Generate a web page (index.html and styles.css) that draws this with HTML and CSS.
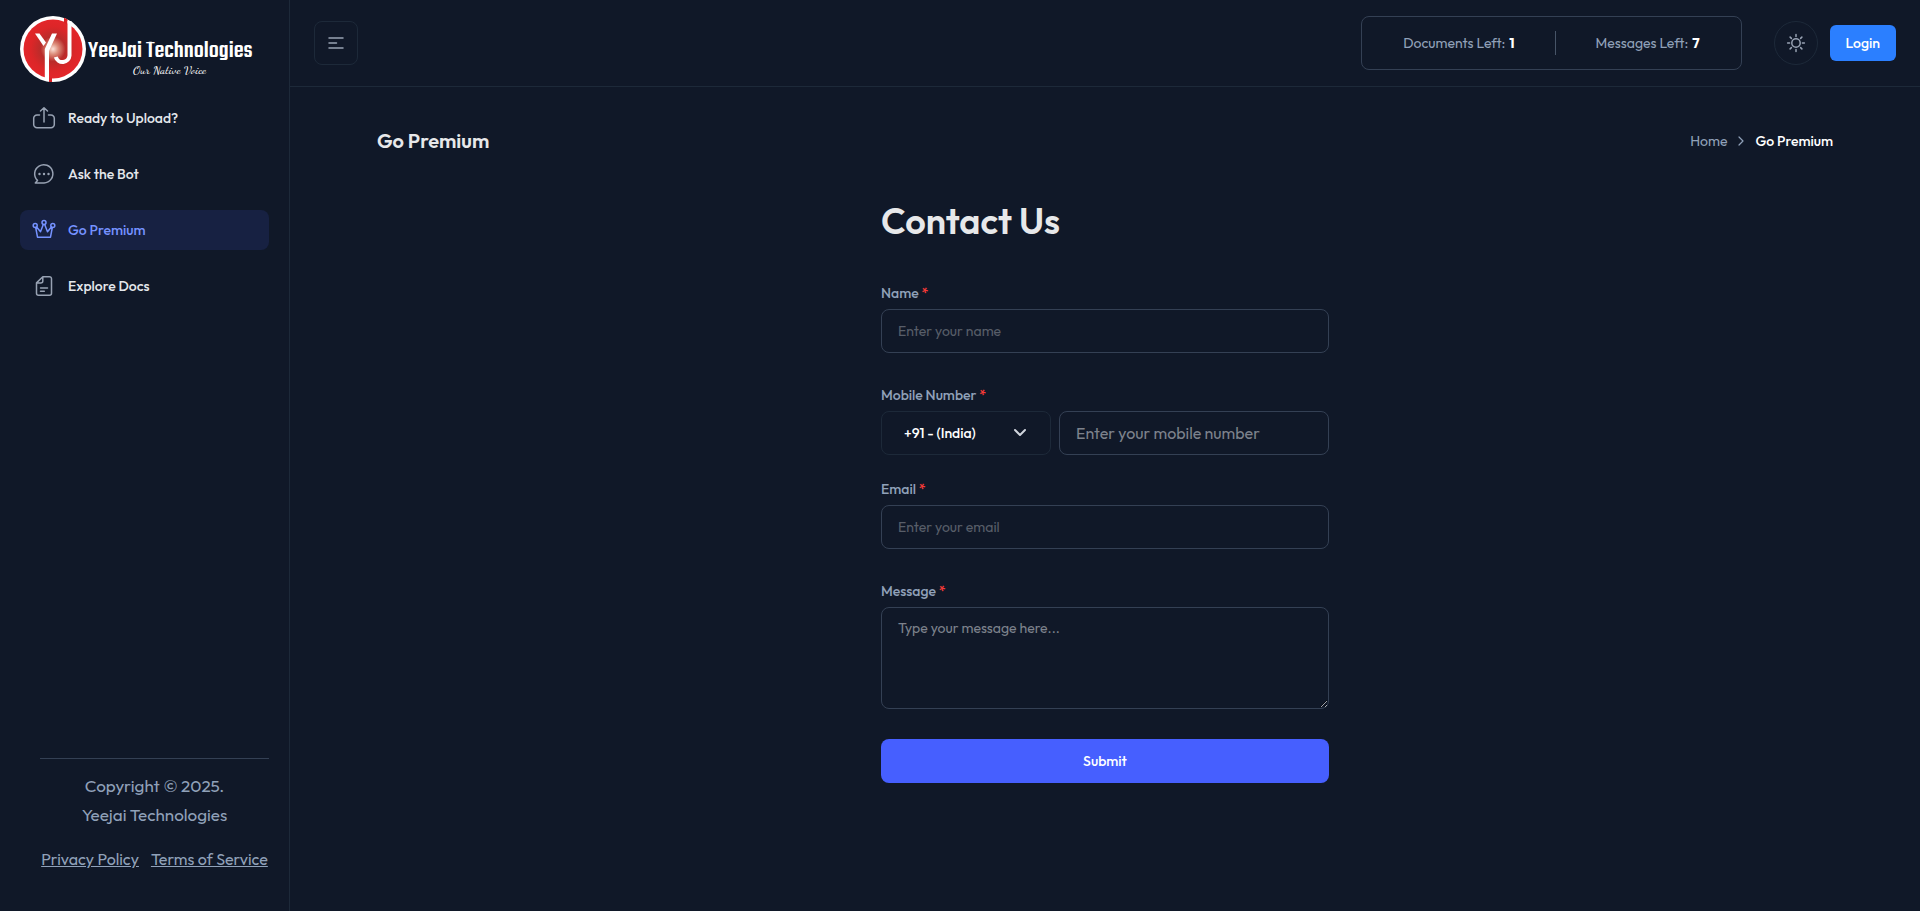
FILE: index.html
```html
<!DOCTYPE html>
<html lang="en">
<head>
<meta charset="utf-8">
<meta name="viewport" content="width=device-width, initial-scale=1">
<title>Go Premium | YeeJai Technologies</title>
<link rel="stylesheet" href="styles.css">
</head>
<body>
<div class="app">
  <aside class="sidebar">
    <a class="brand" href="#">
      <svg class="brand-mark" viewBox="0 0 66 66" aria-hidden="true">
        <defs>
          <radialGradient id="glow" cx="0.5" cy="0.5" r="0.5">
            <stop offset="0" stop-color="#fbe3da"/>
            <stop offset="0.18" stop-color="#dd8f7c"/>
            <stop offset="0.42" stop-color="#b92c2a"/>
            <stop offset="0.75" stop-color="#dc2628"/>
            <stop offset="1" stop-color="#e3262a"/>
          </radialGradient>
        </defs>
        <circle cx="33" cy="33" r="33" fill="#fff"/>
        <circle cx="33" cy="33" r="29.5" fill="url(#glow)"/>
        <path d="M44 1.800 47.500 3.200V9L44 6.500zM29 61.500h3v4.500h-3z" fill="#d92226"/>
        <path d="M15 17.500h4.500l6.500 9-2.500 3.500z" fill="#fff"/>
        <path d="M32 17.500h5L29 35v30.500l-4.200-1V33z" fill="#fff"/>
        <path class="hook" d="M49.500 5v34.500a7 7 0 0 1-13.700 1.500" stroke="#fff" stroke-width="4"/>
        <path d="M48 4l9 8-6-2z" fill="#fff"/>
      </svg>
      <span class="brand-text">
        <span class="brand-name">YeeJai Technologies</span>
        <span class="brand-tag">Our Native Voice</span>
      </span>
    </a>
    <nav class="nav" aria-label="Main">
      <a class="nav-item" href="#">
        <svg class="nav-icon" viewBox="0 0 24 24" aria-hidden="true"><path d="M7.500 9H5a3.300 3.300 0 0 0-3.300 3.300v6.200A3.300 3.300 0 0 0 5 21.800h14a3.300 3.300 0 0 0 3.300-3.300v-6.200A3.300 3.300 0 0 0 19 9h-2.500M12 16V2M8.500 5 12 1.700 15.500 5"/></svg>
        Ready to Upload?
      </a>
      <a class="nav-item" href="#">
        <svg class="nav-icon" viewBox="0 0 24 24" aria-hidden="true"><path d="M12 20.900H3.300l2.200-2.500A9.100 9.100 0 1 1 12 20.900z"/><path class="dots" d="M7.500 12h.01M12 12h.01M16.500 12h.01"/></svg>
        Ask the Bot
      </a>
      <a class="nav-item active" href="#" aria-current="page">
        <svg class="nav-icon" viewBox="0 0 24 24" aria-hidden="true"><circle cx="3.200" cy="7.600" r="2"/><circle cx="12" cy="4.600" r="2"/><circle cx="20.800" cy="7.600" r="2"/><path d="M3.700 9.500 5.500 19.200h13l1.800-9.700M4.600 9l3.900 4.700L11.300 6.500M19.400 9l-3.900 4.700-2.800-7.200"/></svg>
        Go Premium
      </a>
      <a class="nav-item" href="#">
        <svg class="nav-icon" viewBox="0 0 24 24" aria-hidden="true"><path d="M10.800 2.700H17.500a2 2 0 0 1 2 2v14.600a2 2 0 0 1-2 2h-11a2 2 0 0 1-2-2V8.900zM10.800 2.700v4.200a2 2 0 0 1-2 2H4.500M8.500 14h7M8.500 17.300h3.800"/></svg>
        Explore Docs
      </a>
    </nav>
    <footer class="side-foot">
      <p class="copy">Copyright © 2025.<br>Yeejai Technologies</p>
      <p class="legal"><a href="#">Privacy Policy</a><a href="#">Terms of Service</a></p>
    </footer>
  </aside>

  <div class="page">
    <header class="topbar">
      <button class="icon-btn" type="button" aria-label="Toggle sidebar">
        <svg width="16" height="12" viewBox="0 0 16 12" aria-hidden="true"><path d="M1 1h14M1 6h7.500M1 11h14"/></svg>
      </button>
      <div class="usage">
        <span>Documents Left: <b>1</b></span>
        <i class="divider"></i>
        <span>Messages Left: <b>7</b></span>
      </div>
      <button class="icon-btn round" type="button" aria-label="Toggle theme">
        <svg width="20" height="20" viewBox="0 0 20 20" aria-hidden="true"><circle cx="10" cy="10" r="4.200"/><path d="M10 1.600v2M10 16.400v2M1.600 10h2M16.400 10h2M4.100 4.100l1.300 1.300M14.600 14.600l1.300 1.300M4.100 15.900l1.300-1.300M14.600 5.400l1.300-1.300"/></svg>
      </button>
      <button class="login" type="button">Login</button>
    </header>

    <main class="content">
      <div class="title-row">
        <h2>Go Premium</h2>
        <nav class="crumbs" aria-label="Breadcrumb">
          <a href="#">Home</a>
          <svg width="8" height="10" viewBox="0 0 8 10" aria-hidden="true"><path d="M2 1l4 4-4 4"/></svg>
          <span>Go Premium</span>
        </nav>
      </div>
      <form class="contact">
        <h1>Contact Us</h1>
        <div class="field">
          <label for="name">Name <em>*</em></label>
          <input id="name" type="text" placeholder="Enter your name">
        </div>
        <div class="field close">
          <label for="mobile">Mobile Number <em>*</em></label>
          <div class="phone">
            <div class="select-box">
              <select aria-label="Country code"><option>+91 - (India)</option></select>
              <svg width="14" height="10" viewBox="0 0 14 10" aria-hidden="true"><path d="M2 2l5 5 5-5"/></svg>
            </div>
            <input id="mobile" class="large" type="tel" placeholder="Enter your mobile number">
          </div>
        </div>
        <div class="field">
          <label for="email">Email <em>*</em></label>
          <input id="email" type="email" placeholder="Enter your email">
        </div>
        <div class="field last">
          <label for="message">Message <em>*</em></label>
          <textarea id="message" rows="4" placeholder="Type your message here..."></textarea>
        </div>
        <button class="submit" type="submit">Submit</button>
      </form>
    </main>
  </div>
</div>
</body>
</html>
```

FILE: styles.css
```css
* { box-sizing: border-box; }

body {
  margin: 0;
  background: #101828;
  color: #90a1b9;
  font: 400 14px/20px Outfit, Lato, "Open Sans", sans-serif;
}

h1, h2, p { margin: 0; }
a { color: inherit; }
button, input, select, textarea { font: inherit; }
svg { flex: none; fill: none; stroke: currentColor; stroke-linecap: round; stroke-linejoin: round; }

.app { display: flex; min-height: 100vh; }

/* Sidebar */
.sidebar {
  display: flex;
  flex-direction: column;
  flex: none;
  width: 290px;
  padding: 16px 20px 37px;
  border-right: 1px solid #1d2939;
}
.brand { display: flex; color: #fff; text-decoration: none; white-space: nowrap; }
.brand-mark { width: 66px; height: 66px; stroke: none; }
.hook { stroke-linecap: butt; }
.brand-text { display: flex; flex-direction: column; padding: 22px 0 0 2px; }
.brand-name { font: 500 25px/26px Teko, "Barlow Condensed", "Roboto Condensed", sans-serif; }
.brand-tag { padding-left: 45px; font: 400 12px/12px "Dancing Script", Pacifico, Caveat, cursive; }

.nav { display: flex; flex-direction: column; gap: 16px; padding-top: 16px; }
.nav-item {
  display: flex;
  align-items: center;
  gap: 12px;
  height: 40px;
  padding: 0 12px;
  border-radius: 8px;
  color: #e4e7ec;
  font-weight: 500;
  text-decoration: none;
}
.nav-icon { width: 24px; height: 24px; color: #98a2b3; stroke-width: 1.5; }
.dots { stroke-width: 2.4; }
.nav-item.active { background: rgba(70, 95, 255, .12); color: #7592ff; }
.nav-item.active .nav-icon { color: #7592ff; }

.side-foot {
  margin: auto 0 0 20px;
  padding-top: 12px;
  border-top: 1px solid #344054;
  font-size: 16px;
  line-height: 29px;
  text-align: center;
}
.copy { font-size: 17px; }
.legal { display: flex; justify-content: center; gap: 12px; padding-top: 16px; white-space: nowrap; }

/* Top bar */
.page { flex: 1; min-width: 0; }
.topbar {
  display: flex;
  align-items: center;
  height: 87px;
  padding: 0 24px;
  border-bottom: 1px solid #1d2939;
}
.icon-btn {
  display: grid;
  place-items: center;
  width: 44px;
  height: 44px;
  padding: 0;
  border: 1px solid #1d2939;
  border-radius: 8px;
  background: none;
  color: #98a2b3;
}
.icon-btn svg { stroke-width: 1.5; }
.icon-btn.round { margin-left: 32px; border-radius: 50%; }
.usage {
  display: flex;
  align-items: center;
  gap: 40px;
  height: 54px;
  margin-left: auto;
  padding: 0 41px;
  border: 1px solid #344054;
  border-radius: 8px;
}
.usage b { margin-left: 1px; color: #fff; font-weight: 700; }
.divider { width: 1px; height: 24px; background: #475467; }
.login {
  height: 36px;
  margin-left: 12px;
  padding: 0 16px;
  border: 0;
  border-radius: 6px;
  background: #2b7fff;
  color: #fff;
  font-weight: 500;
}

/* Content */
.content { padding: 28px 70px; }
.title-row {
  display: flex;
  align-items: center;
  justify-content: space-between;
  padding: 12px 17px;
}
.title-row h2 { color: #e7e8ea; font-size: 20px; line-height: 28px; font-weight: 600; }
.crumbs { display: flex; align-items: center; gap: 10px; }
.crumbs a { text-decoration: none; }
.crumbs svg { stroke-width: 1.2; }
.crumbs span { color: #fff; font-weight: 500; }

.contact { width: 100%; max-width: 448px; margin: 32px auto 0; }
.contact h1 {
  margin-bottom: 40px;
  color: #e7e8ea;
  font-size: 36px;
  line-height: 44px;
  font-weight: 600;
}
.field { margin-bottom: 32px; }
.field.close { margin-bottom: 24px; }
.field.last { margin-bottom: 30px; }
.field label { display: block; margin-bottom: 6px; font-weight: 500; }
.field em { color: #f93a37; font-style: normal; }
.field input, .field textarea, .select-box {
  display: block;
  width: 100%;
  height: 44px;
  padding: 0 16px;
  border: 1px solid #344054;
  border-radius: 8px;
  outline: 0;
  background: transparent;
  color: #fff;
}
.field ::placeholder { color: #585e69; opacity: 1; }
.field .large { flex: 1; min-width: 0; font-size: 16px; }
.field .large::placeholder, .field textarea::placeholder { color: #7d828c; }
.field textarea { height: 102px; padding: 10px 16px; }
.phone { display: flex; gap: 8px; }
.select-box { display: grid; align-items: center; flex: none; width: 170px; padding: 0; border-color: #1d2939; }
.select-box select, .select-box svg { grid-area: 1 / 1; }
.select-box select {
  width: 100%;
  height: 42px;
  padding: 0 22px;
  border: 0;
  appearance: none;
  background: transparent;
  color: #fff;
  font-weight: 500;
}
.select-box svg { justify-self: end; margin-right: 23px; color: #d0d5dd; stroke-width: 2; pointer-events: none; }
.submit {
  width: 100%;
  height: 44px;
  border: 0;
  border-radius: 8px;
  background: #465fff;
  color: #fff;
  font-weight: 500;
}
```
